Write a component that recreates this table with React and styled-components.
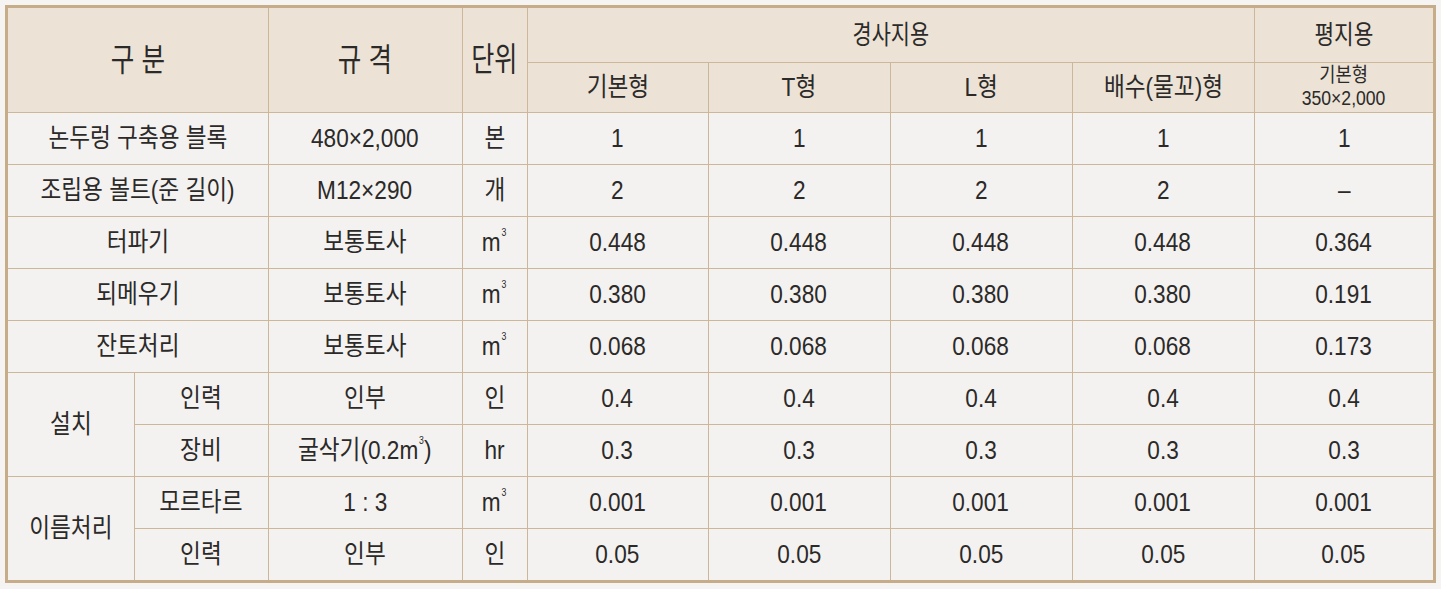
import React from "react";
import styled, { createGlobalStyle } from "styled-components";

const Global = createGlobalStyle`
  html, body { margin: 0; padding: 0; background: #f5f4f2; }
  body {
    font-family: "Liberation Sans", "Noto Sans CJK KR", sans-serif;
    color: #2b2a29;
  }
`;

const Page = styled.div`
  padding: 5px 0 0 5px;
`;

const Frame = styled.div`
  width: 1425px;
  border: 3px solid #c6ac89;
  background: #f4f2f0;
`;

const Table = styled.table`
  width: 1425px;
  border-collapse: collapse;
  border-style: hidden;
  table-layout: fixed;
`;

const Row = styled.tr`
  height: ${(p) => p.$h}px;
`;

const Cell = styled.td`
  padding: 0;
  border: 1px solid #ccb799;
  text-align: center;
  vertical-align: middle;
  background: ${(p) => (p.$head ? "#ece2d5" : "#f4f2f0")};
`;

const Txt = styled.span`
  display: inline-block;
  white-space: nowrap;
  font-size: ${(p) => p.$size || 26}px;
  line-height: ${(p) => p.$lh || 1};
  transform: scaleX(${(p) => p.$sx || 0.87});
`;

const Sup = styled.span`
  display: inline-block;
  font-size: 10px;
  vertical-align: top;
  margin-top: -1px;
  margin-left: 1px;
`;

const M3 = () => (
  <>
    m<Sup>3</Sup>
  </>
);

const widths = [126, 134, 194, 65, 181, 182, 182, 182, 179];

const C = ({ children, ...rest }) => (
  <Cell {...rest}>
    <Txt>{children}</Txt>
  </Cell>
);

const rows = [
  { label: "논두렁 구축용 블록", spec: "480×2,000", unit: "본", vals: ["1", "1", "1", "1", "1"] },
  { label: "조립용 볼트(준 길이)", spec: "M12×290", unit: "개", vals: ["2", "2", "2", "2", "–"] },
  { label: "터파기", spec: "보통토사", unit: <M3 />, vals: ["0.448", "0.448", "0.448", "0.448", "0.364"] },
  { label: "되메우기", spec: "보통토사", unit: <M3 />, vals: ["0.380", "0.380", "0.380", "0.380", "0.191"] },
  { label: "잔토처리", spec: "보통토사", unit: <M3 />, vals: ["0.068", "0.068", "0.068", "0.068", "0.173"] },
];

const groups = [
  {
    name: "설치",
    items: [
      { sub: "인력", spec: "인부", unit: "인", vals: ["0.4", "0.4", "0.4", "0.4", "0.4"] },
      { sub: "장비", spec: <>굴삭기(0.2<M3 />)</>, unit: "hr", vals: ["0.3", "0.3", "0.3", "0.3", "0.3"] },
    ],
  },
  {
    name: "이름처리",
    items: [
      { sub: "모르타르", spec: "1 : 3", unit: <M3 />, vals: ["0.001", "0.001", "0.001", "0.001", "0.001"] },
      { sub: "인력", spec: "인부", unit: "인", vals: ["0.05", "0.05", "0.05", "0.05", "0.05"] },
    ],
  },
];

export default function App() {
  return (
    <Page>
      <Global />
      <Frame>
        <Table>
          <colgroup>
            {widths.map((w, i) => (
              <col key={i} style={{ width: w }} />
            ))}
          </colgroup>
          <thead>
            <Row $h={54}>
              <Cell $head colSpan={2} rowSpan={2}>
                <Txt $size={32} $sx={0.8}>구 분</Txt>
              </Cell>
              <Cell $head rowSpan={2}>
                <Txt $size={32} $sx={0.8}>규 격</Txt>
              </Cell>
              <Cell $head rowSpan={2}>
                <Txt $size={33} $sx={0.76}>단위</Txt>
              </Cell>
              <Cell $head colSpan={4}>
                <Txt $sx={0.8}>경사지용</Txt>
              </Cell>
              <Cell $head>
                <Txt $sx={0.82}>평지용</Txt>
              </Cell>
            </Row>
            <Row $h={50}>
              <C $head>기본형</C>
              <C $head>T형</C>
              <C $head>L형</C>
              <C $head>배수(물꼬)형</C>
              <Cell $head>
                <Txt $size={20} $lh={1.15} $sx={0.88}>
                  기본형
                  <br />
                  350×2,000
                </Txt>
              </Cell>
            </Row>
          </thead>
          <tbody>
            {rows.map((r, i) => (
              <Row $h={52} key={i}>
                <C colSpan={2}>{r.label}</C>
                <C>{r.spec}</C>
                <C>{r.unit}</C>
                {r.vals.map((v, j) => (
                  <C key={j}>{v}</C>
                ))}
              </Row>
            ))}
            {groups.map((g) =>
              g.items.map((it, k) => (
                <Row $h={52} key={g.name + k}>
                  {k === 0 && <C rowSpan={g.items.length}>{g.name}</C>}
                  <C>{it.sub}</C>
                  <C>{it.spec}</C>
                  <C>{it.unit}</C>
                  {it.vals.map((v, j) => (
                    <C key={j}>{v}</C>
                  ))}
                </Row>
              ))
            )}
          </tbody>
        </Table>
      </Frame>
    </Page>
  );
}
